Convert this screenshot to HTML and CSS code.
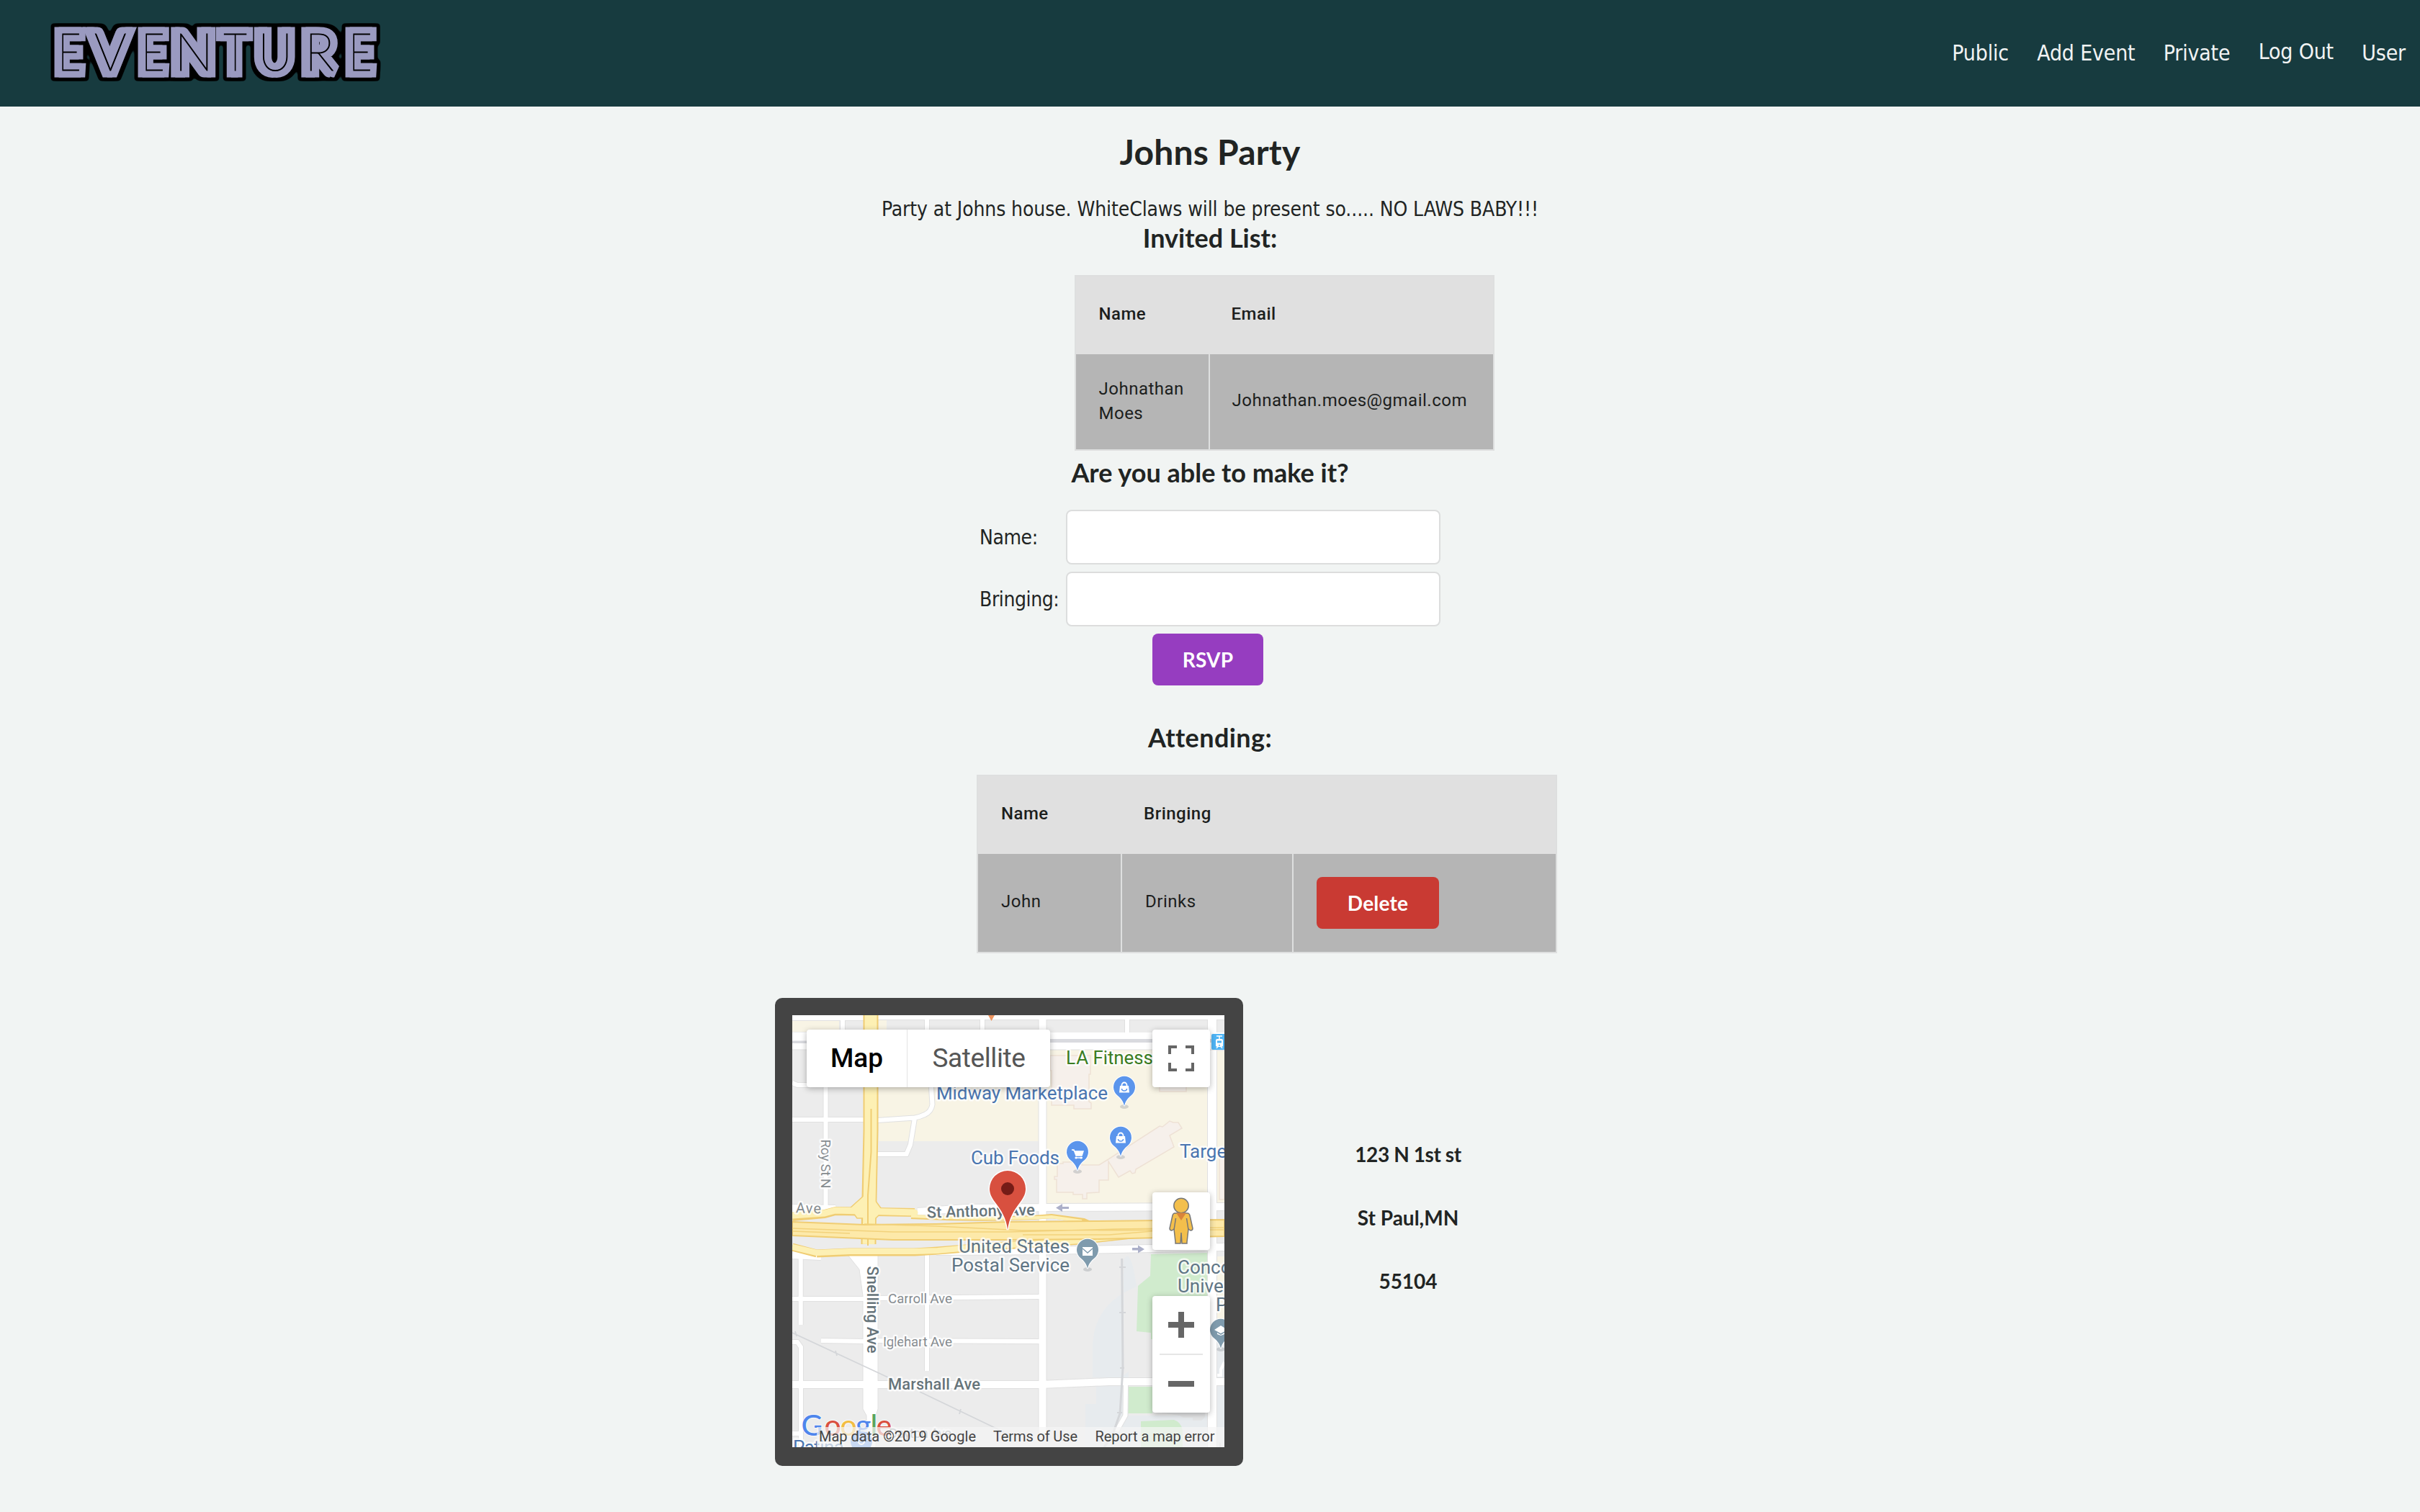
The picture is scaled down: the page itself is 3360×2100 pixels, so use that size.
FILE: index.html
```html
<!DOCTYPE html>
<html lang="en">
<head>
<meta charset="utf-8">
<title>Eventure</title>
<link rel="stylesheet" href="styles.css">
</head>
<body>
<header class="topbar">
  <svg class="logo" width="520" height="148" viewBox="40 0 520 148" role="img" aria-label="Eventure">
    <defs>
      <filter id="outline" filterUnits="userSpaceOnUse" x="40" y="0" width="520" height="148" color-interpolation-filters="sRGB">
        <feMorphology in="SourceAlpha" operator="dilate" radius="5"/>
        <feGaussianBlur stdDeviation="2"/>
        <feComponentTransfer result="edge"><feFuncA type="linear" slope="5" intercept="-2"/></feComponentTransfer>
        <feMerge><feMergeNode in="edge"/><feMergeNode in="SourceGraphic"/></feMerge>
      </filter>
      <g id="word">
        <text transform="translate(80.5 98) scale(.77 1)">E</text>
        <text transform="translate(131 98) scale(.98 1)">V</text>
        <text transform="translate(196.500 98) scale(.77 1)">E</text>
        <text transform="translate(242.500 98) scale(1 1)">N</text>
        <text transform="translate(310.500 98) scale(.79 1)">T</text>
        <text transform="translate(358.500 98) scale(.92 1)">U</text>
        <text transform="translate(423.500 98) scale(.95 1)">R</text>
        <text transform="translate(484.500 98) scale(.77 1)">E</text>
      </g>
    </defs>
    <g class="logo-body" filter="url(#outline)"><use href="#word" x="-4"/><use href="#word" x="2"/></g>
    <use class="logo-inline" href="#word"/>
  </svg>
  <nav class="nav">
    <a>Public</a><a>Add Event</a><a>Private</a><a class="logout">Log Out</a><a>User</a>
  </nav>
</header>
<main class="page">
  <h1>Johns Party</h1>
  <p class="about">Party at Johns house. WhiteClaws will be present so..... NO LAWS BABY!!!</p>
  <h3>Invited List:</h3>
  <div class="table invited">
    <div class="head"><span>Name</span><span>Email</span></div>
    <div class="row"><span>Johnathan<br>Moes</span><span>Johnathan.moes@gmail.com</span></div>
  </div>
  <h3 class="ask">Are you able to make it?</h3>
  <form class="rsvp">
    <label for="n">Name:</label><input id="n">
    <label for="b">Bringing:</label><input id="b">
    <button class="btn purple" type="button">RSVP</button>
  </form>
  <h3 class="attending-title">Attending:</h3>
  <div class="table attending">
    <div class="head"><span>Name</span><span>Bringing</span><span></span></div>
    <div class="row"><span>John</span><span>Drinks</span><span><button class="btn red" type="button">Delete</button></span></div>
  </div>
  <section class="place">
    <div class="map">
      <svg width="600" height="600" viewBox="0 0 600 600">
        <defs>
          <g id="pin"><ellipse cx="0" cy="26" rx="6" ry="3" fill="#9aa0a6" opacity=".4"/><path d="M0 25C-1.500 18-5 14-10 10A15 15 0 1 1 10 10C5 14 1.500 18 0 25Z" stroke="#fff" stroke-width="2" paint-order="stroke"/></g>
          <g id="bag" fill="#fff"><path d="M-6-3H6L7 6.500H-7Z"/><path d="M-3.500-2V-4a3.500 3.500 0 0 1 7 0v2" fill="none" stroke="#fff" stroke-width="1.800"/><path d="M-3.500 1a3.500 3 0 0 0 7 0" fill="none" stroke="#5b95ec" stroke-width="1.500"/></g>
          <g id="minor">
            <path d="M70 3V28M187 3V28M264 3V28M465 3V28M46.500 98V268M0 145H104M193 100L194.500 124Q193 134 184 138Q178 141 170 142.500L118 146M170 143L164 180L158.500 193H117M0 94L7 97H24M11.700 335V430M0 394H102M116 393L345 391M40 452L102 453M118 452L345 453M0 454H7L12 461V600M187 333V494M0 581H14M463 514L462.500 556L450 578"/>
          </g>
          <g id="major"><path d="M347.500 0V580M0 2L105 2M118 1H600M0 268L60 269M174 273L240 268L350 267L600 266M0 333L40 335M200 328L350 327L600 322M0 513H345L440 509H600"/></g>
        </defs>
        <rect width="600" height="600" fill="#ececec"/>
        <path d="M0 8H65V23H0ZM120 5H131V24H120ZM120 48H342V175H120ZM353 48H577V260L353 262ZM590 50H600V260H590ZM590 335H600V430H590Z" fill="#f8f4e5"/>
        <path d="M478 377Q420 400 417 457V503H422V540H407V600H600V556H466L467 495L460 500V340Q470 320 478 377Z" fill="#e7ebee"/>
        <path d="M590 430H600V600H590Z" fill="#e7ebee"/>
        <path d="M498 332L577 330V450H498V441L478 439L480 376L497 362ZM467 516H500V553H466ZM484 564L530 562Q540 565 542 577V600H484Z" fill="#d0ebcd"/>
        <path d="M510 552H573V558L568 563H560L556 563V559H543L538 556Z" fill="#e4e5e6"/>
        <g fill="#f6f0eb" stroke="#eee1d5" stroke-width="1.500">
          <path d="M358 56H414V82H412V120L415 122V130H391V125H360V77H358Z"/>
          <path d="M510 90H547V106H510Z"/>
          <path d="M368 206H376V204H402V208H426L439 200L510 154L514 155L524 147L529 149H536L541 157L524 167L530 183L477 214L476 219L472 220L469 216L453 225L439 203V229H426V246L409 247V255H403V249H390V246H367V228H364V224H368Z"/>
          <path d="M593 199H600V256H593Z"/>
        </g>
        <use href="#minor" class="road case minor"/><use href="#major" class="road case major"/>
        <path d="M583 0V600" class="road case right"/>
        <path d="M77 333L93 353L98 390V547L103 556V600H116V556L119 547V333Z" fill="#fff" stroke="#e0e0e0" stroke-width="1"/>
        <use href="#minor" class="road minor"/><use href="#major" class="road major"/>
        <path d="M583 0V600" class="road right"/>
        <path d="M0 24H600V48H0Z" fill="#fff"/><path d="M0 48H600" stroke="#e0e0e0"/>
        <path d="M0 35.500H345V33H600V38H345V39H0Z" fill="#d9dadf"/>
        <g fill="none" stroke="#d4d6d9" stroke-width="1.800"><path d="M0 441L133 503M177 523L300 582M4 439L6 446M60 466L62 473M234 547L232 554"/><path d="M457.700 338L459 490L455 553L444 585L433 600" stroke-width="3"/><path d="M454 350H463M454 413H463M455 490H461M451 552H458M594 594V600"/><path d="M600 482L595 492V500H590" stroke="#fff" stroke-width="4"/></g>
        <g fill="none" stroke-linejoin="round">
          <path d="M109 0V160L106 300V318" stroke="#f0cd73" stroke-width="21"/>
          <path d="M0 280L45 276L60 272L170 274" stroke="#f0cd73" stroke-width="12"/>
          <path d="M80 268L100 250H110L126 272L116 282H90Z" fill="#fdf0b4" stroke="#f0cd73" stroke-width="1.500"/>
          <path d="M165 280Q280 286 360 279L405 285L420 292" stroke="#f0cd73" stroke-width="6"/>
          <path d="M165 279Q280 285 360 280L402 286" stroke="#fdf0b4" stroke-width="4"/>
          <path d="M0 322L34 331M34 331L80 329L170 329L202 327L265 322L340 317L400 313L480 304" stroke="#f0cd73" stroke-width="11"/>
          <path d="M0 322L34 330L80 328L170 328L202 327L265 321L340 317L400 313L480 304" stroke="#fdf0b4" stroke-width="8"/>
          <path d="M0 278L45 275L60 271L170 274" stroke="#fdf0b4" stroke-width="9" stroke-linecap="round"/>
          <path d="M109 0V160L106 318" stroke="#fdf0b4" stroke-width="17"/>
          <path d="M109.500 130V190L105 250V320" stroke="#f0cd73" stroke-width="2"/>
        </g>
        <path d="M0 287L100 291L200 290L300 287L420 286L600 284V307L420 311L300 312H140L0 306Z" fill="#fde9a9" stroke="#f0cd73" stroke-width="2"/>
        <path d="M0 296L140 301L300 301L450 297L600 295M100 290L200 293L320 299L600 298M0 300L80 303M320 305L440 305L500 300" fill="none" stroke="#f2d27c" stroke-width="1.500"/>
        <path d="M366 267.500L375 262V266H384V269H375V273ZM489 325L480 319.500V323H472V326.500H480V330.500Z" fill="#acb0c9"/>
        <g class="lbl poi">
          <text x="200" y="117" textLength="238">Midway Marketplace</text>
          <text x="248" y="206.500" textLength="123">Cub Foods</text>
          <text x="538" y="197.500">Target</text>
          <text x="1" y="609" textLength="71">Patina</text>
          <text class="green" x="380" y="68" textLength="121">LA Fitness</text>
          <g class="civic"><text x="231" y="330" textLength="154">United States</text><text x="221" y="355.500" textLength="164">Postal Service</text><text x="535" y="359">Concordia</text><text x="535" y="385">University</text><text x="588" y="411">Paul</text></g>
        </g>
        <g class="lbl street">
          <text x="-12" y="274" transform="rotate(2 0 273)" class="s19" textLength="52">y Ave</text>
          <text transform="translate(40 172.500) rotate(90)" textLength="68">Roy St N</text>
          <text x="133" y="399.500" textLength="89">Carroll Ave</text>
          <text x="126" y="459.500" textLength="96">Iglehart Ave</text>
          <text x="134" y="587" textLength="87">Dayton Ave</text>
          <g class="big"><text x="187" y="281.500" transform="rotate(-1.500 187 281)" textLength="150">St Anthony Ave</text><text transform="translate(103.500 348.500) rotate(90)" textLength="121">Snelling Ave</text><text x="133" y="520" textLength="128">Marshall Ave</text></g>
        </g>
        <g fill="#5b95ec"><use href="#pin" x="461" y="101"/><use href="#pin" x="456" y="171"/><use href="#pin" x="396" y="191"/></g>
        <g fill="#7f9bad"><use href="#pin" x="410" y="327"/><use href="#pin" x="595" y="438"/></g>
        <use href="#bag" x="461" y="101"/><use href="#bag" x="456" y="171"/>
        <path d="M388 187H391L394 195H402L404 189H392M393 198H403" fill="#fff" stroke="#fff" stroke-width="1.500"/><circle cx="394" cy="198" r="1.600" fill="#fff"/><circle cx="401" cy="198" r="1.600" fill="#fff"/>
        <path d="M403 322H417V334H403Z" fill="#fff"/><path d="M403 324L410 330L417 324" fill="none" stroke="#7f9bad" stroke-width="1.500"/>
        <path d="M586 437L595 431L604 437L595 442ZM590 441L595 444L600 441V443L595 445L590 443Z" fill="#fff"/>
        <path d="M584 26H600V48H584Q582 48 582 46V28Q582 26 584 26Z" fill="#4fb4f5"/>
        <path d="M589 29H597M593 29V33" stroke="#fff" stroke-width="1.500"/>
        <path d="M590 33H596Q598 33 598 35V43L596 44L598 46H596L594.500 44H591.500L590 46H588L590 44L588 43V35Q588 33 590 33Z" fill="#fff"/><path d="M590 35.500H596V38.500H590ZM592 41H594V42.500H592Z" fill="#4fb4f5"/>
        <path d="M272 0H281L276.500 8Z" fill="#ed9561"/>
        <circle cx="96" cy="592" r="15" fill="#5b95ec"/><circle cx="96" cy="592" r="4" fill="none" stroke="#fff" stroke-width="2"/>
        <path d="M299 298C297 282 291 272 281 259C276 252 274 247 274 241A25 25 0 0 1 324 241C324 247 322 252 317 259C307 272 301 282 299 298Z" fill="#d8503f" stroke="#fff" stroke-width="3" paint-order="stroke"/>
        <circle cx="299" cy="241" r="9" fill="#751c17"/>
        <g class="google"><text x="12.500" y="584" fill="#4f86ec">G</text><text x="44.500" y="584" fill="#d95040">o</text><text x="66.500" y="584" fill="#f2bd42">o</text><text x="88" y="584" fill="#4f86ec">g</text><text x="108.500" y="584" fill="#58a55c">l</text><text x="116.500" y="584" fill="#d95040">e</text></g>
        <path d="M34 572H600V600H34Z" fill="#f5f5f5" opacity=".7"/>
        <g class="legal"><text x="37" y="592" textLength="218">Map data ©2019 Google</text><text x="279" y="592" textLength="117">Terms of Use</text><text x="420.500" y="592" textLength="166">Report a map error</text></g>
      </svg>
      <div class="types"><b>Map</b><span>Satellite</span></div>
      <div class="ctl full"><svg width="36" height="36" viewBox="0 0 36 36"><path d="M2 12V2H12M24 2H34V12M34 24V34H24M12 34H2V24" fill="none" stroke="#666" stroke-width="4"/></svg></div>
      <div class="ctl peg"><svg width="36" height="66" viewBox="0 0 36 66"><g fill="#f3bf4c" stroke="#777" stroke-width="1.500"><path d="M9 22H27Q29 22 30 25L34 43Q34 46 31 46L28 44L26 62V64H19L18 49L17 64H10V62L8 44L5 46Q2 46 2 43L6 25Q7 22 9 22Z"/><path d="M10.500 29L8 45M25.500 29L28 45" fill="none"/><circle cx="18" cy="11.500" r="10.200"/></g><path d="M11 21.500H25L18 32Z" fill="#d9843b"/></svg></div>
      <div class="ctl zoomer"><svg width="60" height="160" viewBox="0 0 60 160"><path d="M12 39H48M30 21V57M12 121H48" stroke="#666" stroke-width="8"/><path d="M0 80H60" stroke="#e6e6e6" stroke-width="2"/></svg></div>
    </div>
    <address><span class="street-line">123 N 1st st</span><span>St Paul,MN</span><span>55104</span></address>
  </section>
</main>
</body>
</html>
```
FILE: styles.css
```css
* { box-sizing: border-box; }
body { margin: 0; min-height: 2100px; background: #f1f4f3; color: #212423; font-family: "DejaVu Sans Condensed", "DejaVu Sans", sans-serif; font-size: 28px; letter-spacing: -0.4px; }
h1, h3, p { margin: 0; }
.topbar { display: flex; justify-content: space-between; height: 148px; padding: 0 20px 0 40px; background: #173b3f; }
.logo { display: block; font: 100 71.5px Lato, sans-serif; letter-spacing: 0; }
.logo-body { fill: #9a9ac0; stroke: #9a9ac0; stroke-width: 19; stroke-miterlimit: 2; }
.logo-inline { fill: #000; stroke: #000; stroke-width: 1.2; }
.nav { display: flex; gap: 39.3px; padding-top: 54px; color: #f1f3f3; font-size: 30px; line-height: 40px; letter-spacing: -0.2px; }
.logout { margin-top: -2px; }
.page { display: flex; flex-direction: column; align-items: center; }
h1, h3 { font-family: Lato, sans-serif; font-weight: 700; letter-spacing: 0; }
h1 { margin-top: 33px; font-size: 48px; line-height: 60px; letter-spacing: 0.2px; }
h3 { font-size: 36px; line-height: 44px; }
.about { margin-top: 32px; line-height: 36px; margin-bottom: -1px; white-space: nowrap; letter-spacing: -0.1px; }
.ask { margin-top: 8px; }
.attending-title { margin-top: 50px; letter-spacing: 0.4px; }
.table { margin-top: 30px; border: 2px solid #dedfdf; background: #b5b5b5; color: #1c1e1d; font: 24px/34px Roboto, sans-serif; letter-spacing: 0.5px; }
.head, .row { display: grid; }
.head { height: 108px; align-items: center; background: #e0e0e0; font-weight: 500; padding-bottom: 4px; }
.head span { padding-left: 32px; }
.row span { display: flex; align-items: center; padding-left: 32px; border-left: 2px solid #dedfdf; }
.row span:first-child { border-left: 0; }
.invited { width: 583px; height: 244px; margin-left: 206px; }
.invited .head, .invited .row { grid-template-columns: 184px 1fr; }
.invited .row { height: 132px; }
.invited .row span { padding-bottom: 3px; }
.invited .row span + span { padding-left: 31px; padding-bottom: 4px; }
.rsvp { display: grid; grid-template-columns: 120px 520px; row-gap: 10px; margin-top: 30px; align-items: center; width: 640px; }
.rsvp input { width: 520px; height: 76px; border: 2px solid #dcdddd; border-radius: 8px; background: #fff; }
.btn { height: 72px; border: 0; border-radius: 8px; padding: 0; color: #fff; font: 700 28px/72px Lato, sans-serif; letter-spacing: 0.2px; }
.purple { grid-column: 1 / 3; justify-self: center; width: 154px; margin-right: 6px; background: #963dc0; }
.red { width: 170px; background: #c93a33; }
.attending { width: 806px; height: 248px; margin-left: 158px; }
.attending .head, .attending .row { grid-template-columns: 198px 238px 1fr; }
.attending .row { height: 136px; }
.attending .row span { padding-bottom: 4px; }
.attending .row span:last-child { padding-bottom: 0; }
.place { display: flex; align-items: center; width: 1208px; margin-top: 62px; }
.map { position: relative; width: 650px; height: 650px; border: solid #444; border-width: 24px 26px 26px 24px; border-radius: 10px; letter-spacing: 0; font-family: Roboto, sans-serif; }
.map svg { display: block; overflow: hidden; }
.road { fill: none; stroke: #fff; }
.minor { stroke-width: 6; }
.major { stroke-width: 10; }
.right { stroke-width: 12; }
.case { stroke: #e0e0e0; }
.case.minor { stroke-width: 8; }
.case.major { stroke-width: 12; }
.case.right { stroke-width: 14; }
.lbl { stroke: #fff; stroke-opacity: 0.75; stroke-width: 5; stroke-linejoin: round; paint-order: stroke; }
.poi { fill: #4a75b0; font-size: 26px; }
.green { fill: #3a7d22; }
.civic { fill: #5f7585; }
.street { fill: #858b8f; font-size: 19px; }
.s19 { font-size: 20px; }
.big { fill: #66747a; font-size: 22px; font-weight: 500; }
.google { font: 500 41px Lato, sans-serif; stroke: #fff; stroke-width: 2; stroke-opacity: 0.8; paint-order: stroke; }
.legal { fill: #444; font-size: 20px; }
.types { position: absolute; left: 20px; top: 20px; display: flex; font-size: 37px; line-height: 80px; text-align: center; background: #fff; border-radius: 4px; box-shadow: 0 2px 8px rgba(0,0,0,.3); }
.types b { width: 140px; height: 80px; color: #000; font-weight: 500; border-right: 1px solid #e3e3e3; }
.types span { width: 198px; color: #565656; letter-spacing: -0.4px; }
.ctl { position: absolute; left: 500px; display: grid; place-items: center; width: 80px; height: 80px; background: #fff; border-radius: 4px; box-shadow: 0 2px 8px rgba(0,0,0,.3); }
.full { top: 20px; }
.peg { top: 246px; }
.zoomer { top: 390px; height: 162px; }
address { display: flex; flex-direction: column; gap: 54px; width: 458px; padding-bottom: 40px; text-align: center; font: 700 28px/34px Lato, sans-serif; letter-spacing: 0; }
.street-line { letter-spacing: -0.4px; }
```
